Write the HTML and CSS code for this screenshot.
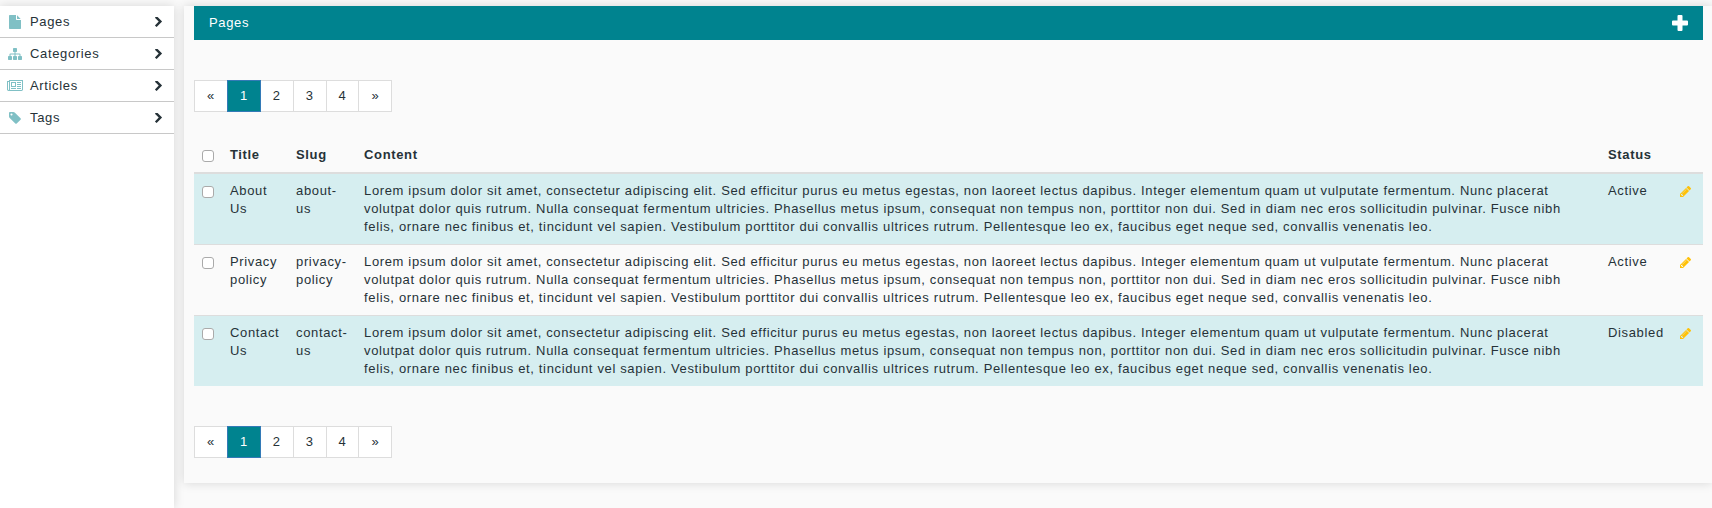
FILE: index.html
```html
<!DOCTYPE html>
<html lang="en">
<head>
<meta charset="utf-8">
<title>Pages</title>
<link rel="stylesheet" href="styles.css">
</head>
<body>
<svg class="sprite" aria-hidden="true">
  <symbol id="chevron" viewBox="346 154 1036 1484"><path fill="currentColor" d="M1363 877l-742 742q-19 19-45 19t-45-19l-166-166q-19-19-19-45t19-45l531-531-531-531q-19-19-19-45t19-45l166-166q19-19 45-19t45 19l742 742q19 19 19 45t-19 45z"/></symbol>
  <symbol id="pencil" viewBox="0 149 1515 1515"><path fill="currentColor" d="M363 1536l91-91-235-235-91 91v107h128v128h107zM886 608q0-22-22-22-10 0-17 7l-542 542q-7 7-7 17 0 22 22 22 10 0 17-7l542-542q7-7 7-17zM832 416l416 416-832 832H0v-416zM1515 512q0 53-37 90l-166 166-416-416 165-165q36-38 91-38 53 0 91 38l235 234q37 39 37 91z"/></symbol>
</svg>
<div class="layout">
  <nav class="sidebar">
    <a class="nav-item" href="#pages">
      <svg class="nav-icon" viewBox="0 0 1792 1792"><path fill="currentColor" d="M1152 512v-472q22 14 36 28l408 408q14 14 28 36h-472zm-128 32q0 40 28 68t68 28h544v1056q0 40-28 68t-68 28h-1344q-40 0-68-28t-28-68v-1600q0-40 28-68t68-28h800v544z"/></svg>
      <span class="nav-label">Pages</span><svg class="chevron"><use href="#chevron"/></svg>
    </a>
    <a class="nav-item" href="#categories">
      <svg class="nav-icon" viewBox="0 0 1792 1792"><path fill="currentColor" d="M1792 1248v320q0 40-28 68t-68 28h-320q-40 0-68-28t-28-68v-320q0-40 28-68t68-28h96v-192h-512v192h96q40 0 68 28t28 68v320q0 40-28 68t-68 28h-320q-40 0-68-28t-28-68v-320q0-40 28-68t68-28h96v-192h-512v192h96q40 0 68 28t28 68v320q0 40-28 68t-68 28h-320q-40 0-68-28t-28-68v-320q0-40 28-68t68-28h96v-192q0-52 38-90t90-38h512v-192h-96q-40 0-68-28t-28-68v-320q0-40 28-68t68-28h320q40 0 68 28t28 68v320q0 40-28 68t-68 28h-96v192h512q52 0 90 38t38 90v192h96q40 0 68 28t28 68z"/></svg>
      <span class="nav-label">Categories</span><svg class="chevron"><use href="#chevron"/></svg>
    </a>
    <a class="nav-item" href="#articles">
      <svg class="nav-icon" viewBox="0 0 2048 1792"><path fill="currentColor" d="M1024 512h-384v384h384v-384zm128 640v128h-640v-128h640zm0-768v640h-640v-640h640zm640 768v128h-512v-128h512zm0-256v128h-512v-128h512zm0-256v128h-512v-128h512zm0-256v128h-512v-128h512zm-1536 960v-960h-128v960q0 26 19 45t45 19 45-19 19-45zm1664 0v-1088h-1536v1088q0 33-11 64h1483q26 0 45-19t19-45zm128-1216v1216q0 80-56 136t-136 56h-1664q-80 0-136-56t-56-136v-1088h256v-128h1792z"/></svg>
      <span class="nav-label">Articles</span><svg class="chevron"><use href="#chevron"/></svg>
    </a>
    <a class="nav-item" href="#tags">
      <svg class="nav-icon" viewBox="0 0 1792 1792"><path fill="currentColor" d="M576 448q0-53-37.500-90.500t-90.500-37.500-90.500 37.500-37.500 90.500 37.500 90.500 90.500 37.500 90.500-37.500 37.500-90.500zm1067 576q0 53-37 90l-491 492q-39 37-91 37-53 0-90-37l-715-716q-38-37-64.500-101t-26.500-117v-416q0-52 38-90t90-38h416q53 0 117 26.500t102 64.500l715 714q37 39 37 91z"/></svg>
      <span class="nav-label">Tags</span><svg class="chevron"><use href="#chevron"/></svg>
    </a>
  </nav>
  <main class="panel">
    <header class="panel-header">
      <h1 class="panel-title">Pages</h1>
      <button class="add-button" type="button" aria-label="Add page"><svg class="add-icon" viewBox="0 0 16 16"><path fill="currentColor" d="M6.500 0h3q1 0 1 1v4.500H15q1 0 1 1v3q0 1-1 1h-4.500V15q0 1-1 1h-3q-1 0-1-1v-4.500H1q-1 0-1-1v-3q0-1 1-1h4.500V1q0-1 1-1z"/></svg></button>
    </header>
    <nav class="pagination" aria-label="Top pagination">
      <a class="page" href="#prev">«</a><a class="page active" href="#1">1</a><a class="page" href="#2">2</a><a class="page" href="#3">3</a><a class="page" href="#4">4</a><a class="page" href="#next">»</a>
    </nav>
    <table class="table">
      <thead>
        <tr><th class="col-check"><input class="check" type="checkbox" aria-label="Select all"></th><th class="col-title">Title</th><th class="col-slug">Slug</th><th>Content</th><th class="col-status">Status</th><th class="col-edit"></th></tr>
      </thead>
      <tbody>
        <tr><td><input class="check" type="checkbox" aria-label="Select About Us"></td><td>About Us</td><td>about-us</td><td>Lorem ipsum dolor sit amet, consectetur adipiscing elit. Sed efficitur purus eu metus egestas, non laoreet lectus dapibus. Integer elementum quam ut vulputate fermentum. Nunc placerat volutpat dolor quis rutrum. Nulla consequat fermentum ultricies. Phasellus metus ipsum, consequat non tempus non, porttitor non dui. Sed in diam nec eros sollicitudin pulvinar. Fusce nibh felis, ornare nec finibus et, tincidunt vel sapien. Vestibulum porttitor dui convallis ultrices rutrum. Pellentesque leo ex, faucibus eget neque sed, convallis venenatis leo.</td><td>Active</td><td><a class="edit" href="#edit-1" aria-label="Edit About Us"><svg class="edit-icon"><use href="#pencil"/></svg></a></td></tr>
        <tr><td><input class="check" type="checkbox" aria-label="Select Privacy policy"></td><td>Privacy policy</td><td>privacy-policy</td><td>Lorem ipsum dolor sit amet, consectetur adipiscing elit. Sed efficitur purus eu metus egestas, non laoreet lectus dapibus. Integer elementum quam ut vulputate fermentum. Nunc placerat volutpat dolor quis rutrum. Nulla consequat fermentum ultricies. Phasellus metus ipsum, consequat non tempus non, porttitor non dui. Sed in diam nec eros sollicitudin pulvinar. Fusce nibh felis, ornare nec finibus et, tincidunt vel sapien. Vestibulum porttitor dui convallis ultrices rutrum. Pellentesque leo ex, faucibus eget neque sed, convallis venenatis leo.</td><td>Active</td><td><a class="edit" href="#edit-2" aria-label="Edit Privacy policy"><svg class="edit-icon"><use href="#pencil"/></svg></a></td></tr>
        <tr><td><input class="check" type="checkbox" aria-label="Select Contact Us"></td><td>Contact Us</td><td>contact-us</td><td>Lorem ipsum dolor sit amet, consectetur adipiscing elit. Sed efficitur purus eu metus egestas, non laoreet lectus dapibus. Integer elementum quam ut vulputate fermentum. Nunc placerat volutpat dolor quis rutrum. Nulla consequat fermentum ultricies. Phasellus metus ipsum, consequat non tempus non, porttitor non dui. Sed in diam nec eros sollicitudin pulvinar. Fusce nibh felis, ornare nec finibus et, tincidunt vel sapien. Vestibulum porttitor dui convallis ultrices rutrum. Pellentesque leo ex, faucibus eget neque sed, convallis venenatis leo.</td><td>Disabled</td><td><a class="edit" href="#edit-3" aria-label="Edit Contact Us"><svg class="edit-icon"><use href="#pencil"/></svg></a></td></tr>
      </tbody>
    </table>
    <nav class="pagination" aria-label="Bottom pagination">
      <a class="page" href="#prev">«</a><a class="page active" href="#1">1</a><a class="page" href="#2">2</a><a class="page" href="#3">3</a><a class="page" href="#4">4</a><a class="page" href="#next">»</a>
    </nav>
  </main>
</div>
</body>
</html>
```
FILE: styles.css
```css
* {
  box-sizing: border-box;
}

body {
  display: flex;
  flex-direction: column;
  min-height: 100vh;
  margin: 0;
  padding-top: 6px;
  background: #fafafa;
  color: #263238;
  font-family: "Liberation Sans", Arial, sans-serif;
  font-size: 13px;
  line-height: 18px;
  letter-spacing: 0.05em;
}

.sprite {
  position: absolute;
  width: 0;
  height: 0;
}

.layout {
  display: flex;
  flex: 1;
  align-items: flex-start;
  gap: 10px;
}

.sidebar {
  flex: 0 0 174px;
  align-self: stretch;
  background: #fff;
  box-shadow: 0 0 10px rgba(0, 0, 0, 0.15);
}

.nav-item {
  display: flex;
  align-items: center;
  height: 32px;
  padding: 0 12px 0 7px;
  border-bottom: 1px solid #c8c8c8;
  color: #263238;
  text-decoration: none;
}

.nav-icon {
  width: 16px;
  height: 14px;
  margin-right: 7px;
  color: #80c0c5;
}

.nav-label {
  flex: 1;
}

.chevron {
  width: 7px;
  height: 10px;
}

.panel {
  flex: 1;
  padding: 0 9px 25px 10px;
  background: #fafafa;
  box-shadow: 0 0 10px rgba(0, 0, 0, 0.15);
}

.panel-header {
  display: flex;
  align-items: center;
  justify-content: space-between;
  height: 34px;
  padding: 0 15px;
  background: #00838f;
  color: #fff;
}

.panel-title {
  margin: 0;
  font-size: 13px;
  font-weight: 400;
}

.add-button {
  display: flex;
  padding: 0;
  border: 0;
  background: none;
  color: #fff;
}

.add-icon {
  width: 16px;
  height: 16px;
}

.pagination {
  display: flex;
  margin-top: 40px;
}

.page {
  padding: 6px 12px;
  border: 1px solid #ddd;
  background: #fff;
  color: #263238;
  text-decoration: none;
}

.page + .page {
  margin-left: -1px;
}

.page.active {
  z-index: 1;
  border-color: #337ab7;
  background: #00838f;
  color: #fff;
}

.table {
  width: 100%;
  margin-top: 26px;
  border-collapse: separate;
  border-spacing: 0;
  table-layout: fixed;
}

.table th,
.table td {
  padding: 8px;
  text-align: left;
  vertical-align: top;
}

.table th {
  border-bottom: 2px solid #ddd;
}

.table tbody tr + tr td {
  border-top: 1px solid #ddd;
}

.table tbody tr:nth-child(odd) {
  background: #d6eef0;
}

.col-check {
  width: 28px;
}

.col-title {
  width: 66px;
}

.col-slug {
  width: 68px;
}

.col-status {
  width: 72px;
}

.col-edit {
  width: 31px;
}

.check {
  display: block;
  appearance: none;
  width: 12px;
  height: 12px;
  margin: 4px 0 0;
  border: 1px solid #aaa;
  border-radius: 3px;
  background: #fff;
}

.check:checked {
  background: #00838f;
}

.edit {
  display: block;
  padding-top: 4px;
  color: #ffc107;
}

.edit-icon {
  display: block;
  width: 11px;
  height: 11px;
}
```
